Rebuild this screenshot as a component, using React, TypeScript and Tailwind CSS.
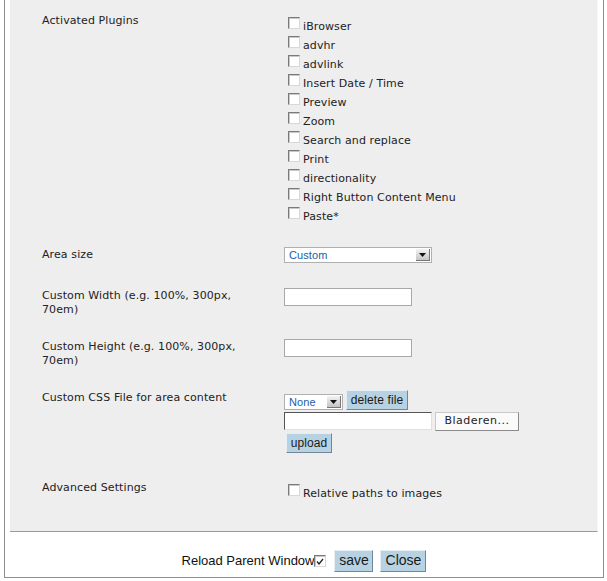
import React from 'react';

const plugins = [
  'iBrowser',
  'advhr',
  'advlink',
  'Insert Date / Time',
  'Preview',
  'Zoom',
  'Search and replace',
  'Print',
  'directionality',
  'Right Button Content Menu',
  'Paste*',
];

const Box: React.FC<{ checked?: boolean }> = ({ checked }) => (
  <span className="mt-[1px] flex h-[12px] w-[12px] shrink-0 items-center justify-center border border-t-[#7a7a7a] border-l-[#7a7a7a] border-r-[#d8d8d8] border-b-[#d8d8d8] bg-white shadow-[inset_1px_1px_0_#c8c8c8]">
    {checked && (
      <svg width="8" height="7" viewBox="0 0 8 7">
        <path d="M1 3.5 L3 6 L7 1" fill="none" stroke="#222" strokeWidth="1.3" />
      </svg>
    )}
  </span>
);

const CheckItem: React.FC<{ label: string }> = ({ label }) => (
  <div className="flex h-[19px] items-start">
    <span className="ml-[4px]"><Box /></span>
    <span className="ml-[3px] leading-[19px] pt-[1px]">{label}</span>
  </div>
);

const Select: React.FC<{ value: string; w: string }> = ({ value, w }) => (
  <div className={`flex h-[16px] items-stretch border border-[#b0b0b0] bg-white ${w}`}>
    <span className="flex-1 pl-[4px] text-[11px] leading-[14px] text-[#1b5da6] font-['Liberation_Sans',Arial,sans-serif]">
      {value}
    </span>
    <span className="my-[1px] mr-[1px] flex w-[14px] items-center justify-center border-r border-b border-[#777] bg-gradient-to-b from-[#f4f4f4] to-[#c4c4c4]">
      <svg width="7" height="4" viewBox="0 0 7 4">
        <path d="M0 0 H7 L3.5 4 Z" fill="#111" />
      </svg>
    </span>
  </div>
);

const BlueButton: React.FC<{ children: React.ReactNode; className?: string }> = ({ children, className }) => (
  <span
    className={`inline-flex items-center justify-center border border-[#e6eef3] border-r-[#6f8796] border-b-[#6f8796] bg-[#b7d3e3] text-[#1a1a1a] font-['Liberation_Sans',Arial,sans-serif] ${className ?? ''}`}
  >
    {children}
  </span>
);

const Row: React.FC<{ label: React.ReactNode; children: React.ReactNode; className?: string }> = ({
  label,
  children,
  className,
}) => (
  <div className={`flex items-start ${className ?? ''}`}>
    <div className="w-[242px] pr-[20px] leading-[14px]">{label}</div>
    <div className="flex-1">{children}</div>
  </div>
);

export default function App() {
  return (
    <div className="h-[581px] w-[607px] bg-white">
      <div className="ml-[4px] w-[600px] border-x border-b border-[#8e8e8e] px-[5px]">
        <div className="border-b border-[#9a9a9a] border-r border-r-[#f7f7f7] bg-[#eeeeee] pl-[32px] pt-[14px] pb-[29px] text-[11px] tracking-[0.1px] text-[#222] font-['DejaVu_Sans',Verdana,sans-serif]">
          <Row label="Activated Plugins">
            <div className="pt-[2px]">
              {plugins.map((p) => (
                <CheckItem key={p} label={p} />
              ))}
            </div>
          </Row>

          <Row label="Area size" className="mt-[23px]">
            <div className="-mt-[1px]">
              <Select value="Custom" w="w-[148px]" />
            </div>
          </Row>

          <Row label={<>Custom Width (e.g. 100%, 300px, 70em)</>} className="mt-[26px]">
            <div className="-mt-[1px] h-[18px] w-[128px] border border-[#a8a8a8] bg-white" />
          </Row>

          <Row label={<>Custom Height (e.g. 100%, 300px, 70em)</>} className="mt-[23px]">
            <div className="-mt-[1px] h-[18px] w-[128px] border border-[#a8a8a8] bg-white" />
          </Row>

          <Row label="Custom CSS File for area content" className="mt-[23px]">
            <div className="-mt-[1px] flex items-end gap-[3px]">
              <Select value="None" w="w-[59px]" />
              <BlueButton className="h-[20px] w-[62px] text-[12px]">delete file</BlueButton>
            </div>
            <div className="mt-[2px] flex items-start gap-[3px]">
              <div className="h-[18px] w-[148px] border border-t-[#555] border-l-[#555] border-r-[#e0e0e0] border-b-[#e0e0e0] bg-white" />
              <span className="flex h-[19px] w-[84px] items-center justify-center border border-[#c9c9c9] border-r-[#8a8a8a] border-b-[#8a8a8a] bg-[#fafafa] text-[11px] tracking-[0.5px]">
                Bladeren...
              </span>
            </div>
            <div className="mt-[2px] pl-[2px]">
              <BlueButton className="h-[20px] w-[46px] text-[12px]">upload</BlueButton>
            </div>
          </Row>

          <Row label="Advanced Settings" className="mt-[28px]">
            <div className="pt-[2px]">
              <CheckItem label="Relative paths to images" />
            </div>
          </Row>
        </div>

        <div className="flex h-[45px] items-center justify-center pt-[12px] text-[13px] text-[#111] font-['Liberation_Sans',Arial,sans-serif]">
          <span>Reload Parent Window</span>
          <Box checked />
          <BlueButton className="ml-[8px] h-[22px] w-[39px] text-[14px]">save</BlueButton>
          <BlueButton className="ml-[7px] h-[22px] w-[46px] text-[14px]">Close</BlueButton>
        </div>
      </div>
    </div>
  );
}
